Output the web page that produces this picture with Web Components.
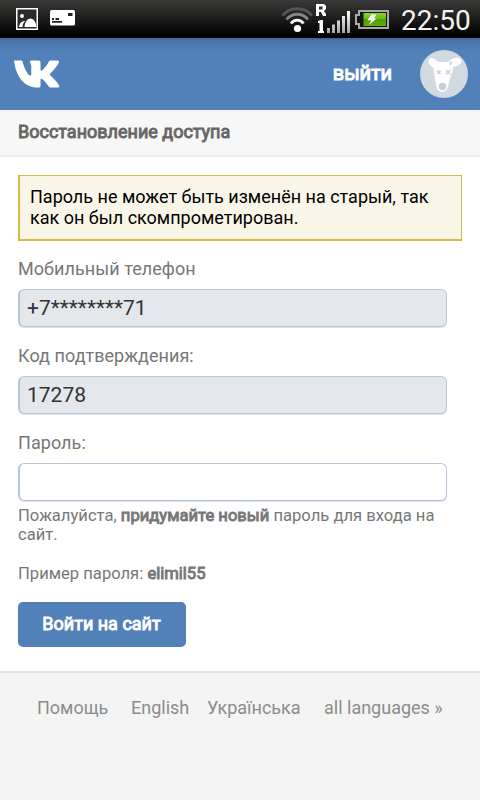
<!DOCTYPE html>
<html lang="ru">
<head>
<meta charset="utf-8">
<title>Восстановление доступа</title>
<style>
  html, body { margin: 0; height: 100%; }
  body { font-family: Roboto, "Noto Sans", sans-serif; background: #fff; overflow: hidden; }
</style>
</head>
<body>
<restore-page></restore-page>

<script>
class StatusBar extends HTMLElement {
  constructor() {
    super();
    this.attachShadow({ mode: 'open' });
  }

  connectedCallback() {
    this.shadowRoot.innerHTML = `
      <style>
        :host { display: flex; align-items: center; height: 38px; box-sizing: border-box; background: linear-gradient(#393937, #1c1c1b 50%, #000 95%); color: #f2f2f2; }
        svg { display: block; width: 394px; height: 38px; flex: none; }
        .time { width: 80px; margin-left: 7px; font-size: 28px; line-height: 38px; padding-top: 3px; }
      </style>
      <svg viewBox="0 0 394 38">
        <defs>
          <linearGradient id="charge" x1="0" y1="0" x2="0" y2="1">
            <stop offset="0" stop-color="#8dd32c"/><stop offset=".5" stop-color="#62b90c"/><stop offset=".5" stop-color="#4c9c00"/><stop offset="1" stop-color="#5fae08"/>
          </linearGradient>
          <linearGradient id="bar" x1="0" y1="0" x2="0" y2="1">
            <stop offset="0" stop-color="#fff"/><stop offset="1" stop-color="#a5a5a5"/>
          </linearGradient>
        </defs>
        <rect x="16.75" y="8.75" width="20.5" height="20.5" fill="#292928" stroke="#fff" stroke-width="1.5"/>
        <circle cx="22" cy="16" r="2" fill="#fff"/>
        <path d="M19 27c.4-3.400 2.500-6 6-6-1.500 1.400-2.300 3.300-2.500 6zM24.500 27c.5-5 2.800-8.500 6-8.500 3.200 0 5.500 3.500 6 8.500z" fill="#fff"/>
        <rect x="50" y="10" width="25" height="15.500" rx="1.500" fill="#fff"/>
        <path d="M68 13h4.500v3H68zM52 18h2v2h-2zM55.500 18h3.500v2h-3.500zM52 21h10v1.800H52z" fill="#222"/>
        <g fill="none" stroke-width="2.800">
          <path d="M282.500 15.500C290 6.500 304.500 6.500 312 15.500" stroke="#555"/>
          <path d="M286.500 19.500C292 12.500 302.500 12.500 308 19.500" stroke="#858585"/>
          <path d="M291 23.500C294 19 300.500 19 303.500 23.500" stroke="#fff"/>
        </g>
        <circle cx="297.500" cy="28.500" r="3.600" fill="#fff"/>
        <path fill-rule="evenodd" d="M316 4h8l2 2v3l-2 2 2 3v2h-3l-2-4h-2v4h-3zM319 6.500v3h3.500v-3zM318 21l3-1h2v11h1v2h-6v-2h1.500v-8H318z" fill="#fff"/>
        <path d="M327 28h3v5h-3zM332 24.500h3V33h-3zM337 20.500h3V33h-3zM342 16h3v17h-3zM347 11h3v22h-3z" fill="url(#bar)"/>
        <path d="M359 11h29v17h-29v-4h-3v-9h3z" fill="#161616" stroke="#aaa" stroke-width="2"/>
        <rect x="363.500" y="13" width="22.500" height="13" fill="url(#charge)"/>
        <path d="M371.500 14.500h5l-2.500 4h2.800l-8 6.500 2.500-4.800h-4z" fill="#fff"/>
      </svg>
      <span class="time"><slot></slot></span>
    `;
  }
}
customElements.define('status-bar', StatusBar);


class SiteHeader extends HTMLElement {
  constructor() {
    super();
    this.attachShadow({ mode: 'open' });
  }

  connectedCallback() {
    this.shadowRoot.innerHTML = `
      <style>
        :host { display: flex; align-items: center; height: 72px; box-sizing: border-box; padding: 0 12px 0 14px; background: linear-gradient(#41638c 0, #4a75a8 3px, #5181b8 13px); color: #fff; }
        svg { display: block; flex: none; }
        .logo { width: 46px; height: 28px; margin-right: auto; }
        .exit { font-size: 20px; line-height: 24px; -webkit-text-stroke: 1.1px #fff; letter-spacing: -.1px; margin-right: 28px; margin-top: -2px; }
        .avatar { width: 48px; height: 48px; }
      </style>
      <svg class="logo" viewBox="0 0 46 28"><path fill="#fff" d="M0 .500h7.200q1 0 1.300 1C10.500 9 13.500 14.500 16 15.500q1.300.3 1.300-1.800V6.500c-.2-2.800-1.300-3.500-1.500-4.500q0-1.500 1.400-1.500H25q1.500 0 1.500 1.700v7.600q.3 1.800 1.600.6C31.500 7.200 33.500 4.500 34.900 1.500q.5-1 1.600-1h7.300q1.700 0 1.100 1.700C43.500 5.500 40 9.800 36.300 13.500q-.9 1 .1 2c3.600 3.400 7 6.600 8.800 10.200q.7 1.800-1.200 1.800h-7.500q-1 0-1.700-1C32 22.500 29.500 19.500 27.500 18.700q-1-.3-1 1v6.300q0 1.500-1.600 1.500h-1.400C13 27.500 2.500 20.500 0 .5z"/></svg>
      <span class="exit"><slot></slot></span>
      <svg class="avatar" viewBox="0 0 48 48">
        <circle cx="24" cy="24" r="24" fill="#d3d9e0"/>
        <path fill="#fff" d="M9 9.500c1-2.400 5-2 7.200.8 1 1.300 2 1.700 3.800 1.700h7c1.500 0 2.500-.6 3.500-2 2.500-2.700 9-3.200 10.700-.5 1.400 3-2 6.800-8 7.500-.6 4-1.700 8-3.200 11.500-1 2.500-.8 5-1.800 8-1.800 7.200-10.400 7.200-12 0C15.300 30 14.200 24 13.600 18C10.500 16.500 7.700 13 9 9.500z"/>
        <circle cx="22.500" cy="36.500" r="3.700" fill="#c9cfd7"/>
        <path fill="none" stroke="#c9cfd7" stroke-width="1.500" d="M17 20.500l3.500 3.500m0-3.500L17 24M26 20l4.500 4.500m0-4.500L26 24.500M30 15c0-2 .5-2.500 2-3"/>
      </svg>
    `;
  }
}
customElements.define('site-header', SiteHeader);


class NoticeBox extends HTMLElement {
  constructor() {
    super();
    this.attachShadow({ mode: 'open' });
  }

  connectedCallback() {
    this.shadowRoot.innerHTML = `
      <style>
        :host { display: block; height: 66px; box-sizing: border-box; padding: 10px 10px 0; border: solid #d4bc4c; border-width: 1px 1px 2px 2px; background: #f9f6e7; color: #000; font-size: 18px; line-height: 21px; white-space: nowrap; }
      </style>
      <slot></slot>
    `;
  }
}
customElements.define('notice-box', NoticeBox);


class FormField extends HTMLElement {
  constructor() {
    super();
    this.attachShadow({ mode: 'open' });
  }

  connectedCallback() {
    const value = this.getAttribute('value') || '';
    this.shadowRoot.innerHTML = `
      <style>
        :host { display: flex; flex-direction: column; gap: 9px; width: 429px; }
        .label { font-size: 18px; line-height: 22px; letter-spacing: .06px; color: #777; }
        .box { height: 38px; margin-bottom: 1px; box-sizing: border-box; padding: 0 7px; border: solid #b8c7d7; border-width: 1px 1px 1px 2px; border-radius: 6px; box-shadow: 0 1px #dbe3eb; background: #fff; color: #333; font-size: 21px; line-height: 36px; }
        .filled { background: #e4e7ec; }
      </style>
      <span class="label"><slot></slot></span>
      <div class="box ${value ? 'filled' : ''}">${value}</div>
    `;
  }
}
customElements.define('form-field', FormField);


class SubmitButton extends HTMLElement {
  constructor() {
    super();
    this.attachShadow({ mode: 'open' });
  }

  connectedCallback() {
    this.shadowRoot.innerHTML = `
      <style>
        :host { display: block; width: 168px; height: 45px; box-sizing: border-box; padding-right: 1px; border-radius: 5px; background: #5181b8; color: #fff; text-align: center; font-size: 18px; line-height: 44px; -webkit-text-stroke: .9px #fff; white-space: nowrap; }
      </style>
      <slot></slot>
    `;
  }
}
customElements.define('submit-button', SubmitButton);


class SiteFooter extends HTMLElement {
  constructor() {
    super();
    this.attachShadow({ mode: 'open' });
  }

  connectedCallback() {
    this.shadowRoot.innerHTML = `
      <style>
        :host { display: flex; flex: 1; box-sizing: border-box; padding: 23px 37px 0; border-top: 2px solid #dce2e8; background: #f4f4f4; color: #8c8c8c; font-size: 18px; line-height: 24px; white-space: nowrap; }
        ::slotted(span) { flex: none; }
      </style>
      <slot></slot>
    `;
  }
}
customElements.define('site-footer', SiteFooter);


class RestorePage extends HTMLElement {
  constructor() {
    super();
    this.attachShadow({ mode: 'open' });
  }

  connectedCallback() {
    this.shadowRoot.innerHTML = `
      <style>
        :host { display: flex; flex-direction: column; height: 800px; }
        .title { height: 47px; box-sizing: border-box; padding: 0 18px; border-bottom: 2px solid #ededed; background: #f7f7f7; color: #666; font-size: 18px; line-height: 44px; -webkit-text-stroke: .9px #666; }
        main { display: flex; flex-direction: column; height: 514px; box-sizing: border-box; padding: 18px 18px 0; }
        form-field { margin-top: 17px; }
        .hint { margin: 4px 0 0; font-size: 16.6px; line-height: 19px; color: #777; white-space: nowrap; }
        .hint + .hint { margin-top: 20px; }
        b { font-weight: 400; -webkit-text-stroke: .9px #777; }
        submit-button { margin-top: 19px; }
      </style>
      <status-bar>22:50</status-bar>
      <site-header>выйти</site-header>
      <div class="title"><span>Восстановление доступа</span></div>
      <main>
        <notice-box>Пароль не может быть изменён на старый, так<br>как он был скомпрометирован.</notice-box>
        <form-field value="+7********71">Мобильный телефон</form-field>
        <form-field value="17278">Код подтверждения:</form-field>
        <form-field>Пароль:</form-field>
        <p class="hint">Пожалуйста, <b>придумайте новый</b> пароль для входа на<br>сайт.</p>
        <p class="hint">Пример пароля: <b>elimil55</b></p>
        <submit-button>Войти на сайт</submit-button>
      </main>
      <site-footer>
        <span style="width: 94px">Помощь</span>
        <span style="width: 76px">English</span>
        <span style="width: 117px">Українська</span>
        <span>all languages »</span>
      </site-footer>
    `;
  }
}
customElements.define('restore-page', RestorePage);
</script>
</body>
</html>
